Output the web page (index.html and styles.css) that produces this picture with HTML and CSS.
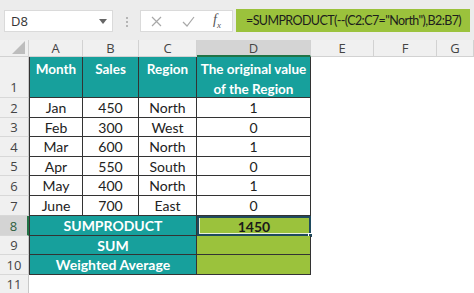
FILE: index.html
```html
<!DOCTYPE html>
<html lang="en">
<head>
    <meta charset="UTF-8">
    <title>SUMPRODUCT</title>
    <link rel="stylesheet" href="styles.css">
</head>
<body>
<div class="app">
    <div class="formula-bar">
        <div class="name-box">
            <span>D8</span>
            <svg width="8" height="5" viewBox="0 0 8 5"><path d="M0 0h8L4 5z" fill="#666"/></svg>
        </div>
        <div class="grip"><i></i><i></i><i></i></div>
        <div class="fx-buttons">
            <svg class="btn" width="11" height="11" viewBox="0 0 11 11"><path d="M1 1l9 9M10 1l-9 9" stroke="#a8a8a8" stroke-width="1.2" fill="none"/></svg>
            <svg class="btn" width="13" height="11" viewBox="0 0 13 11"><path d="M1 6l4 4 7-9" stroke="#a8a8a8" stroke-width="1.2" fill="none"/></svg>
            <span class="fx">f<sub>x</sub></span>
        </div>
        <div class="formula">=SUMPRODUCT(--(C2:C7="North"),B2:B7)</div>
    </div>

    <div class="sheet">
        <div class="corner"><svg width="13" height="13" viewBox="0 0 13 13"><path d="M13 0v13H0z" fill="#bdbdbd"/></svg></div>
        <div class="col-head">A</div>
        <div class="col-head">B</div>
        <div class="col-head">C</div>
        <div class="col-head active">D</div>
        <div class="col-head">E</div>
        <div class="col-head">F</div>
        <div class="col-head">G</div>

        <div class="row-head bottom">1</div>
        <div class="cell head first">Month</div>
        <div class="cell head">Sales</div>
        <div class="cell head">Region</div>
        <div class="cell head">The original value<br>of the Region</div>
        <div class="blank"></div><div class="blank"></div><div class="blank"></div>

        <div class="row-head">2</div>
        <div class="cell first">Jan</div><div class="cell">450</div><div class="cell">North</div><div class="cell">1</div>
        <div class="blank"></div><div class="blank"></div><div class="blank"></div>

        <div class="row-head">3</div>
        <div class="cell first">Feb</div><div class="cell">300</div><div class="cell">West</div><div class="cell">0</div>
        <div class="blank"></div><div class="blank"></div><div class="blank"></div>

        <div class="row-head">4</div>
        <div class="cell first">Mar</div><div class="cell">600</div><div class="cell">North</div><div class="cell">1</div>
        <div class="blank"></div><div class="blank"></div><div class="blank"></div>

        <div class="row-head">5</div>
        <div class="cell first">Apr</div><div class="cell">550</div><div class="cell">South</div><div class="cell">0</div>
        <div class="blank"></div><div class="blank"></div><div class="blank"></div>

        <div class="row-head">6</div>
        <div class="cell first">May</div><div class="cell">400</div><div class="cell">North</div><div class="cell">1</div>
        <div class="blank"></div><div class="blank"></div><div class="blank"></div>

        <div class="row-head">7</div>
        <div class="cell first">June</div><div class="cell">700</div><div class="cell">East</div><div class="cell">0</div>
        <div class="blank"></div><div class="blank"></div><div class="blank"></div>

        <div class="row-head active">8</div>
        <div class="cell label first">SUMPRODUCT</div>
        <div class="cell result selected">1450<span class="handle"></span></div>
        <div class="blank"></div><div class="blank"></div><div class="blank"></div>

        <div class="row-head">9</div>
        <div class="cell label first">SUM</div>
        <div class="cell result"></div>
        <div class="blank"></div><div class="blank"></div><div class="blank"></div>

        <div class="row-head">10</div>
        <div class="cell label first">Weighted Average</div>
        <div class="cell result"></div>
        <div class="blank"></div><div class="blank"></div><div class="blank"></div>

        <div class="row-head">11</div>
        <div class="blank"></div><div class="blank"></div><div class="blank"></div><div class="blank"></div>
        <div class="blank"></div><div class="blank"></div><div class="blank"></div>
    </div>
</div>
</body>
</html>
```

FILE: styles.css
```css
*{
    box-sizing: border-box;
}

body{
    margin:0;
    padding:0;
    background:#fff;
    font-family: Lato, "Open Sans", sans-serif;
    overflow: hidden;
}

.app{
    width:474px;
    height:293px;
}

/* formula bar */
.formula-bar{
    height:40px;
    background:#ececec;
    display:flex;
    align-items:flex-start;
    padding:9px 0 0 4px;
}

.name-box{
    width:109px;
    height:22px;
    margin-top:1px;
    background:#fff;
    border:1px solid #dadada;
    display:flex;
    align-items:center;
    justify-content:space-between;
    padding:0 5px 0 6px;
    font-family: "Open Sans", sans-serif;
    font-size:13px;
    color:#333;
}

.grip{
    width:27px;
    display:flex;
    flex-direction:column;
    align-items:center;
    gap:2px;
    padding-top:8px;
}

.grip i{
    width:2px;
    height:2px;
    background:#b5b5b5;
}

.fx-buttons{
    width:93px;
    height:22px;
    margin-top:1px;
    background:#fff;
    border:1px solid #dadada;
    display:flex;
    align-items:center;
    padding:0 0 0 10px;
    gap:20px;
}

.fx{
    font-family: "Liberation Serif", serif;
    font-style:italic;
    font-size:14px;
    color:#555;
    margin-left:-2px;
}

.fx sub{
    font-size:9px;
}

.formula{
    width:234px;
    height:23px;
    margin-left:3px;
    background:#9bc23c;
    display:flex;
    align-items:center;
    padding-left:10px;
    font-family: Lato, sans-serif;
    font-size:12.5px;
    letter-spacing:-0.6px;
    color:#1d1d1d;
    white-space:nowrap;
    overflow:hidden;
}

/* sheet */
.sheet{
    display:grid;
    grid-template-columns: 29px 54px 56px 58px 114px 63px 63px 1fr;
    grid-template-rows: 17px 41px 20px 19px 20px 19px 20px 20px 20px 19px 20px 1fr;
    height:253px;
}

.corner{
    background:#f0f0f0;
    border-right:1px solid #d2d2d2;
    border-bottom:1px solid #d2d2d2;
    display:flex;
    align-items:flex-end;
    justify-content:flex-end;
    padding:0 3px 2px 0;
}

.col-head{
    background:#f0f0f0;
    border-right:1px solid #d2d2d2;
    border-bottom:1px solid #d2d2d2;
    display:flex;
    align-items:center;
    justify-content:center;
    font-family: "Open Sans", sans-serif;
    font-size:13px;
    color:#444;
}

.col-head.active{
    background:#d4d4d4;
    border-bottom:2px solid #217346;
}

.row-head{
    background:#f0f0f0;
    border-right:1px solid #c8c8c8;
    border-bottom:1px solid #d8d8d8;
    display:flex;
    align-items:center;
    justify-content:center;
    font-family: "Open Sans", sans-serif;
    font-size:13px;
    color:#444;
}

.row-head.bottom{
    align-items:flex-end;
    padding-bottom:1px;
}

.row-head.active{
    background:#d4d4d4;
    color:#2f5f3e;
    border-right:2px solid #217346;
}

.cell{
    border-right:1px solid #333;
    border-bottom:1px solid #333;
    display:flex;
    align-items:center;
    justify-content:center;
    font-size:14px;
    color:#222;
    white-space:nowrap;
    position:relative;
}

.cell.first{
    border-left:1px solid #333;
}

.cell.head{
    background:#17a09c;
    color:#fff;
    font-weight:bold;
    font-size:13.5px;
    align-items:flex-start;
    text-align:center;
    line-height:20px;
    padding-top:2px;
}

.cell.label{
    grid-column: span 3;
    background:#17a09c;
    color:#fff;
    font-weight:bold;
}

.cell.result{
    background:#9bc23c;
    font-weight:bold;
    color:#1a1a1a;
}

.cell.selected{
    border:2px solid #1f4a5e;
    box-shadow: inset 1px -1px 0 #e8f0d8;
}

.handle{
    position:absolute;
    right:-4px;
    bottom:-4px;
    width:5px;
    height:5px;
    background:#1f4a5e;
    border:1px solid #fff;
}

.blank{
    background:#fff;
}
```
